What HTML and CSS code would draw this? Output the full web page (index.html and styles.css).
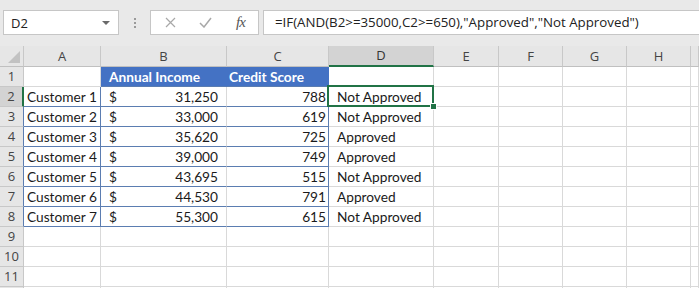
FILE: index.html
```html
<!DOCTYPE html>
<html lang="en">
<head>
    <meta charset="UTF-8">
    <title>Loan Approval</title>
    <link rel="stylesheet" href="styles.css">
</head>
<body>
    <div class="formula-bar">
        <div class="name-box">
            <span>D2</span>
            <span class="caret"></span>
        </div>
        <div class="grip"><span></span><span></span><span></span></div>
        <div class="fn-box">
            <span class="fn-icon">
                <svg width="11" height="11" viewBox="0 0 11 11"><path d="M1 1L10 10M10 1L1 10" stroke="#a8a8a8" stroke-width="1.2" fill="none"/></svg>
            </span>
            <span class="fn-icon">
                <svg width="13" height="11" viewBox="0 0 13 11"><path d="M1 6L5 10L12 1" stroke="#a8a8a8" stroke-width="1.5" fill="none"/></svg>
            </span>
            <span class="fn-icon fx">fx</span>
        </div>
        <div class="formula">=IF(AND(B2&gt;=35000,C2&gt;=650),"Approved","Not Approved")</div>
    </div>

    <table class="sheet">
        <colgroup>
            <col class="c-rh">
            <col class="c-a">
            <col class="c-b">
            <col class="c-c">
            <col class="c-d">
            <col class="c-e">
            <col class="c-std">
            <col class="c-std">
            <col class="c-std">
            <col class="c-end">
        </colgroup>
        <thead>
            <tr>
                <th class="corner"><span class="corner-mark"></span></th>
                <th>A</th>
                <th>B</th>
                <th>C</th>
                <th class="active">D</th>
                <th>E</th>
                <th>F</th>
                <th>G</th>
                <th>H</th>
                <th></th>
            </tr>
        </thead>
        <tbody>
            <tr>
                <td class="rh">1</td>
                <td></td>
                <td class="hd pad">Annual Income</td>
                <td class="hd last">Credit Score</td>
                <td></td><td></td><td></td><td></td><td></td><td></td>
            </tr>
            <tr>
                <td class="rh active">2</td>
                <td class="name">Customer 1</td>
                <td class="income"><div class="money"><span>$</span><span>31,250</span></div></td>
                <td class="score">788</td>
                <td class="result current">Not Approved<span class="handle"></span></td>
                <td></td><td></td><td></td><td></td><td></td>
            </tr>
            <tr>
                <td class="rh edge">3</td>
                <td class="name">Customer 2</td>
                <td class="income"><div class="money"><span>$</span><span>33,000</span></div></td>
                <td class="score">619</td>
                <td class="result">Not Approved</td>
                <td></td><td></td><td></td><td></td><td></td>
            </tr>
            <tr>
                <td class="rh edge">4</td>
                <td class="name">Customer 3</td>
                <td class="income"><div class="money"><span>$</span><span>35,620</span></div></td>
                <td class="score">725</td>
                <td class="result">Approved</td>
                <td></td><td></td><td></td><td></td><td></td>
            </tr>
            <tr>
                <td class="rh edge">5</td>
                <td class="name">Customer 4</td>
                <td class="income"><div class="money"><span>$</span><span>39,000</span></div></td>
                <td class="score">749</td>
                <td class="result">Approved</td>
                <td></td><td></td><td></td><td></td><td></td>
            </tr>
            <tr>
                <td class="rh edge">6</td>
                <td class="name">Customer 5</td>
                <td class="income"><div class="money"><span>$</span><span>43,695</span></div></td>
                <td class="score">515</td>
                <td class="result">Not Approved</td>
                <td></td><td></td><td></td><td></td><td></td>
            </tr>
            <tr>
                <td class="rh edge">7</td>
                <td class="name">Customer 6</td>
                <td class="income"><div class="money"><span>$</span><span>44,530</span></div></td>
                <td class="score">791</td>
                <td class="result">Approved</td>
                <td></td><td></td><td></td><td></td><td></td>
            </tr>
            <tr>
                <td class="rh edge">8</td>
                <td class="name">Customer 7</td>
                <td class="income"><div class="money"><span>$</span><span>55,300</span></div></td>
                <td class="score">615</td>
                <td class="result">Not Approved</td>
                <td></td><td></td><td></td><td></td><td></td>
            </tr>
            <tr>
                <td class="rh">9</td>
                <td></td><td></td><td></td><td></td><td></td><td></td><td></td><td></td><td></td>
            </tr>
            <tr>
                <td class="rh">10</td>
                <td></td><td></td><td></td><td></td><td></td><td></td><td></td><td></td><td></td>
            </tr>
            <tr>
                <td class="rh">11</td>
                <td></td><td></td><td></td><td></td><td></td><td></td><td></td><td></td><td></td>
            </tr>
            <tr>
                <td class="rh"></td>
                <td></td><td></td><td></td><td></td><td></td><td></td><td></td><td></td><td></td>
            </tr>
        </tbody>
    </table>
</body>
</html>
```

FILE: styles.css
```css
body {
    margin: 0;
    height: 288px;
    background-color: #fff;
    font-family: Lato, "Liberation Sans", sans-serif;
    color: #1a1a1a;
    overflow: hidden;
}

.formula-bar {
    height: 46px;
    box-sizing: border-box;
    padding: 10px 0 0 3px;
    background-color: #e9e9e9;
    display: flex;
    align-items: flex-start;
}

.name-box,
.fn-box,
.formula {
    height: 25px;
    box-sizing: border-box;
    border: 1px solid #c6c6c6;
    background-color: #fff;
}

.name-box {
    width: 116px;
    padding: 0 7px 0 7px;
    display: flex;
    align-items: center;
    justify-content: space-between;
    font-family: "Open Sans", sans-serif;
    font-size: 13px;
    color: #222;
}

.caret {
    width: 0;
    height: 0;
    margin-right: 1px;
    border-left: 4px solid transparent;
    border-right: 4px solid transparent;
    border-top: 4px solid #6a6a6a;
}

.grip {
    width: 31px;
    height: 25px;
    display: flex;
    flex-direction: column;
    align-items: center;
    justify-content: center;
    gap: 2px;
}

.grip span {
    width: 2px;
    height: 2px;
    background-color: #9a9a9a;
}

.fn-box {
    width: 109px;
    padding-left: 2px;
    display: flex;
    align-items: center;
}

.fn-icon {
    width: 36px;
    display: flex;
    justify-content: center;
}

.fx {
    font-family: "Liberation Serif", serif;
    font-style: italic;
    font-size: 15px;
    color: #555;
    letter-spacing: -1px;
}

.formula {
    flex: 1;
    margin-left: 4px;
    border-right: none;
    padding-left: 11px;
    font-family: "Open Sans", sans-serif;
    font-size: 13.3px;
    line-height: 23px;
    color: #222;
    white-space: nowrap;
    overflow: hidden;
}

/* sheet grid */
.sheet {
    table-layout: fixed;
    border-collapse: separate;
    border-spacing: 0;
    width: 699px;
}

.c-rh { width: 24px; }
.c-a { width: 77px; }
.c-b { width: 126px; }
.c-c { width: 102px; }
.c-d { width: 105px; }
.c-e { width: 65px; }
.c-std { width: 64px; }
.c-end { width: 8px; }

.sheet th,
.sheet td {
    height: 19px;
    padding: 0;
    border-right: 1px solid #d9d9d9;
    border-bottom: 1px solid #d9d9d9;
    white-space: nowrap;
    overflow: hidden;
    line-height: 19px;
}

.sheet th {
    background-color: #e6e6e6;
    border-right-color: #c8c8c8;
    border-bottom-color: #c0c0c0;
    font-family: "Open Sans", sans-serif;
    font-weight: normal;
    font-size: 13px;
    color: #444;
    text-align: center;
}

.sheet th.active {
    background-color: #d3d3d3;
    border-bottom: 2px solid #217346;
    height: 18px;
    color: #333;
}

.corner {
    position: relative;
}

.corner-mark {
    position: absolute;
    right: 3px;
    bottom: 3px;
    width: 0;
    height: 0;
    border-left: 12px solid transparent;
    border-bottom: 12px solid #c2c2c2;
}

.sheet td {
    font-size: 13.7px;
}

.sheet td.rh {
    background-color: #e6e6e6;
    border-right-color: #c8c8c8;
    border-bottom-color: #c8c8c8;
    font-family: "Open Sans", sans-serif;
    font-size: 13px;
    color: #444;
    text-align: center;
}

.sheet td.rh.active {
    background-color: #d3d3d3;
    border-right: 2px solid #217346;
}

.sheet td.rh.edge {
    border-right-color: #5b7db1;
}

.hd {
    background-color: #4472c4;
    border-right-color: #4472c4 !important;
    border-bottom-color: #5b7db1 !important;
    color: #fff;
    font-weight: bold;
}

.hd.pad {
    padding-left: 8px !important;
}

.hd.last {
    padding-left: 2px !important;
}

.name {
    padding-left: 3px !important;
    border-right-color: #5b7db1 !important;
    border-bottom-color: #5b7db1 !important;
}

.income {
    border-bottom-color: #5b7db1 !important;
}

.money {
    display: flex;
    justify-content: space-between;
    padding: 0 8px 0 8px;
}

.score {
    text-align: right;
    padding-right: 2px !important;
    border-right-color: #5b7db1 !important;
    border-bottom-color: #5b7db1 !important;
}

.result {
    padding-left: 8px !important;
}

.current {
    position: relative;
    overflow: visible !important;
}

.current::before {
    content: "";
    position: absolute;
    left: -2px;
    top: -2px;
    right: -1px;
    bottom: -1px;
    border: 2px solid #217346;
}

.handle {
    position: absolute;
    right: -4px;
    bottom: -4px;
    width: 5px;
    height: 5px;
    background-color: #217346;
    border: 1px solid #fff;
}
```
